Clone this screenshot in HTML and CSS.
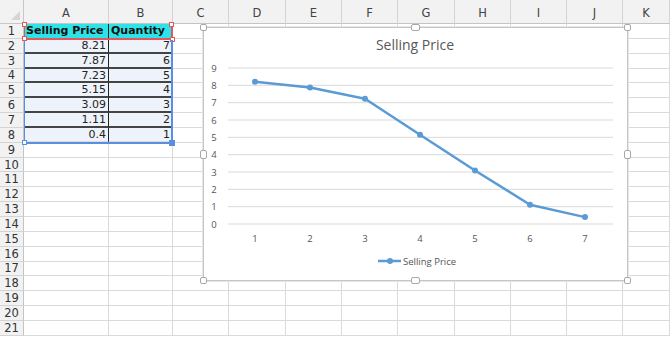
FILE: index.html
```html
<!DOCTYPE html>
<html lang="en">
<head>
    <meta charset="UTF-8">
    <title>Selling Price</title>
    <link rel="stylesheet" href="styles.css">
</head>
<body>
<div class="sheet">
    <div class="grid">
        <!-- column headers -->
        <div class="corner"></div>
        <div class="ch">A</div><div class="ch">B</div><div class="ch">C</div><div class="ch">D</div>
        <div class="ch">E</div><div class="ch">F</div><div class="ch">G</div><div class="ch">H</div>
        <div class="ch">I</div><div class="ch">J</div><div class="ch">K</div>

        <!-- data -->
        <div class="rh">1</div><div class="c head split">Selling Price</div><div class="c head">Quantity</div>
        <div class="c"></div><div class="c"></div><div class="c"></div><div class="c"></div><div class="c"></div><div class="c"></div><div class="c"></div><div class="c"></div><div class="c"></div>

        <div class="rh">2</div><div class="c num split">8.21</div><div class="c num">7</div>
        <div class="c"></div><div class="c"></div><div class="c"></div><div class="c"></div><div class="c"></div><div class="c"></div><div class="c"></div><div class="c"></div><div class="c"></div>

        <div class="rh">3</div><div class="c num split">7.87</div><div class="c num">6</div>
        <div class="c"></div><div class="c"></div><div class="c"></div><div class="c"></div><div class="c"></div><div class="c"></div><div class="c"></div><div class="c"></div><div class="c"></div>

        <div class="rh">4</div><div class="c num split">7.23</div><div class="c num">5</div>
        <div class="c"></div><div class="c"></div><div class="c"></div><div class="c"></div><div class="c"></div><div class="c"></div><div class="c"></div><div class="c"></div><div class="c"></div>

        <div class="rh">5</div><div class="c num split">5.15</div><div class="c num">4</div>
        <div class="c"></div><div class="c"></div><div class="c"></div><div class="c"></div><div class="c"></div><div class="c"></div><div class="c"></div><div class="c"></div><div class="c"></div>

        <div class="rh">6</div><div class="c num split">3.09</div><div class="c num">3</div>
        <div class="c"></div><div class="c"></div><div class="c"></div><div class="c"></div><div class="c"></div><div class="c"></div><div class="c"></div><div class="c"></div><div class="c"></div>

        <div class="rh">7</div><div class="c num split">1.11</div><div class="c num">2</div>
        <div class="c"></div><div class="c"></div><div class="c"></div><div class="c"></div><div class="c"></div><div class="c"></div><div class="c"></div><div class="c"></div><div class="c"></div>

        <div class="rh">8</div><div class="c num split last">0.4</div><div class="c num last">1</div>
        <div class="c"></div><div class="c"></div><div class="c"></div><div class="c"></div><div class="c"></div><div class="c"></div><div class="c"></div><div class="c"></div><div class="c"></div>

        <!-- empty rows -->
        <div class="rh">9</div><div class="c"></div><div class="c"></div><div class="c"></div><div class="c"></div><div class="c"></div><div class="c"></div><div class="c"></div><div class="c"></div><div class="c"></div><div class="c"></div><div class="c"></div>
        <div class="rh">10</div><div class="c"></div><div class="c"></div><div class="c"></div><div class="c"></div><div class="c"></div><div class="c"></div><div class="c"></div><div class="c"></div><div class="c"></div><div class="c"></div><div class="c"></div>
        <div class="rh">11</div><div class="c"></div><div class="c"></div><div class="c"></div><div class="c"></div><div class="c"></div><div class="c"></div><div class="c"></div><div class="c"></div><div class="c"></div><div class="c"></div><div class="c"></div>
        <div class="rh">12</div><div class="c"></div><div class="c"></div><div class="c"></div><div class="c"></div><div class="c"></div><div class="c"></div><div class="c"></div><div class="c"></div><div class="c"></div><div class="c"></div><div class="c"></div>
        <div class="rh">13</div><div class="c"></div><div class="c"></div><div class="c"></div><div class="c"></div><div class="c"></div><div class="c"></div><div class="c"></div><div class="c"></div><div class="c"></div><div class="c"></div><div class="c"></div>
        <div class="rh">14</div><div class="c"></div><div class="c"></div><div class="c"></div><div class="c"></div><div class="c"></div><div class="c"></div><div class="c"></div><div class="c"></div><div class="c"></div><div class="c"></div><div class="c"></div>
        <div class="rh">15</div><div class="c"></div><div class="c"></div><div class="c"></div><div class="c"></div><div class="c"></div><div class="c"></div><div class="c"></div><div class="c"></div><div class="c"></div><div class="c"></div><div class="c"></div>
        <div class="rh">16</div><div class="c"></div><div class="c"></div><div class="c"></div><div class="c"></div><div class="c"></div><div class="c"></div><div class="c"></div><div class="c"></div><div class="c"></div><div class="c"></div><div class="c"></div>
        <div class="rh">17</div><div class="c"></div><div class="c"></div><div class="c"></div><div class="c"></div><div class="c"></div><div class="c"></div><div class="c"></div><div class="c"></div><div class="c"></div><div class="c"></div><div class="c"></div>
        <div class="rh">18</div><div class="c"></div><div class="c"></div><div class="c"></div><div class="c"></div><div class="c"></div><div class="c"></div><div class="c"></div><div class="c"></div><div class="c"></div><div class="c"></div><div class="c"></div>
        <div class="rh">19</div><div class="c"></div><div class="c"></div><div class="c"></div><div class="c"></div><div class="c"></div><div class="c"></div><div class="c"></div><div class="c"></div><div class="c"></div><div class="c"></div><div class="c"></div>
        <div class="rh">20</div><div class="c"></div><div class="c"></div><div class="c"></div><div class="c"></div><div class="c"></div><div class="c"></div><div class="c"></div><div class="c"></div><div class="c"></div><div class="c"></div><div class="c"></div>
        <div class="rh">21</div><div class="c"></div><div class="c"></div><div class="c"></div><div class="c"></div><div class="c"></div><div class="c"></div><div class="c"></div><div class="c"></div><div class="c"></div><div class="c"></div><div class="c"></div>
    </div>

    <!-- range highlights of the chart source -->
    <div class="sel sel-name">
        <span class="knob tl"></span><span class="knob tr"></span><span class="knob bl"></span><span class="knob br"></span>
    </div>
    <div class="sel sel-values">
        <span class="knob bl"></span><span class="knob br fill"></span>
    </div>

    <!-- chart object -->
    <div class="chart">
        <svg class="plot" width="425" height="254" viewBox="0 0 425 254">
            <text class="title" x="212" y="23" text-anchor="middle">Selling Price</text>
            <g class="gridlines">
                <line x1="25" x2="410" y1="41" y2="41"/>
                <line x1="25" x2="410" y1="58.3" y2="58.3"/>
                <line x1="25" x2="410" y1="75.7" y2="75.7"/>
                <line x1="25" x2="410" y1="93" y2="93"/>
                <line x1="25" x2="410" y1="110.3" y2="110.3"/>
                <line x1="25" x2="410" y1="127.7" y2="127.7"/>
                <line x1="25" x2="410" y1="145" y2="145"/>
                <line x1="25" x2="410" y1="162.3" y2="162.3"/>
                <line x1="25" x2="410" y1="179.7" y2="179.7"/>
                <line x1="25" x2="410" y1="197" y2="197"/>
            </g>
            <g class="axis" text-anchor="middle">
                <text x="11" y="44.5">9</text>
                <text x="11" y="61.8">8</text>
                <text x="11" y="79.2">7</text>
                <text x="11" y="96.5">6</text>
                <text x="11" y="113.8">5</text>
                <text x="11" y="131.2">4</text>
                <text x="11" y="148.5">3</text>
                <text x="11" y="165.8">2</text>
                <text x="11" y="183.2">1</text>
                <text x="11" y="200.5">0</text>
                <text x="52" y="215">1</text>
                <text x="107" y="215">2</text>
                <text x="162" y="215">3</text>
                <text x="217" y="215">4</text>
                <text x="272" y="215">5</text>
                <text x="327" y="215">6</text>
                <text x="382" y="215">7</text>
            </g>
            <polyline class="series" points="52,54.7 107,60.6 162,71.7 217,107.8 272,143.5 327,177.8 382,190.1"/>
            <g class="marker">
                <circle cx="52" cy="54.7" r="3"/>
                <circle cx="107" cy="60.6" r="3"/>
                <circle cx="162" cy="71.7" r="3"/>
                <circle cx="217" cy="107.8" r="3"/>
                <circle cx="272" cy="143.5" r="3"/>
                <circle cx="327" cy="177.8" r="3"/>
                <circle cx="382" cy="190.1" r="3"/>
            </g>
            <line class="series" x1="175" x2="198" y1="234" y2="234"/>
            <circle class="marker" cx="187" cy="234" r="3"/>
            <text class="legend" x="200" y="237.5">Selling Price</text>
        </svg>
        <span class="grip g-tl"></span><span class="grip g-tm"></span><span class="grip g-tr"></span>
        <span class="grip g-ml"></span><span class="grip g-mr"></span>
        <span class="grip g-bl"></span><span class="grip g-bm"></span><span class="grip g-br"></span>
    </div>
</div>
</body>
</html>
```

FILE: styles.css
```css
body {
    margin: 0;
    background: #ffffff;
    font-family: 'DejaVu Sans', 'Liberation Sans', sans-serif;
    overflow: hidden;
}
.sheet {
    position: relative;
    width: 670px;
    height: 338px;
    overflow: hidden;
}
.grid {
    display: grid;
    grid-template-columns: 24px 85px 64px 56px 57px 56px 56px 57px 56px 56px 56px 1fr;
    grid-template-rows: 24px repeat(21, 14.85px);
}
.grid > div {
    box-sizing: border-box;
}
.corner {
    position: relative;
    background: #f2f2f2;
    border-right: 1px solid #c8c8c8;
    border-bottom: 1px solid #c8c8c8;
}
.corner::after {
    content: "";
    position: absolute;
    right: 3px;
    bottom: 3px;
    border-left: 9px solid transparent;
    border-bottom: 9px solid #d6d6d6;
}
.ch {
    display: flex;
    align-items: center;
    justify-content: center;
    padding-top: 2px;
    background: #f2f2f2;
    border-right: 1px solid #d4d4d4;
    border-bottom: 1px solid #c4c4c4;
    font-size: 11.5px;
    color: #444;
}
.rh {
    display: flex;
    align-items: center;
    justify-content: center;
    background: #f2f2f2;
    border-right: 1px solid #c4c4c4;
    border-bottom: 1px solid #d4d4d4;
    font-size: 11.5px;
    color: #333;
}
.c {
    border-right: 1px solid #dadada;
    border-bottom: 1px solid #dadada;
    font-size: 11px;
    line-height: 14px;
    color: #222;
    white-space: nowrap;
    overflow: hidden;
}
.head {
    background: #2ee3e8;
    font-weight: bold;
    color: #111;
    padding-left: 2px;
}
.num {
    background: #eef2fa;
    text-align: right;
    padding-right: 2px;
    border-bottom: 2px solid #444;
}
.num.last {
    border-bottom-color: #dadada;
}
.split {
    border-right: 1px solid #222;
}

/* source range outlines */
.sel {
    position: absolute;
    left: 24px;
    width: 149px;
    box-sizing: border-box;
}
.sel-name {
    top: 24px;
    height: 16px;
    border: 1px solid #e2575a;
    border-width: 0 2px 2px 1px;
}
.sel-values {
    top: 40px;
    height: 104px;
    border: 1px solid #5a8ee0;
    border-width: 0 2px 2px 1px;
}
.knob {
    position: absolute;
    width: 3px;
    height: 3px;
    background: #fff;
    border: 1px solid currentColor;
}
.sel-name .knob { color: #e2575a; }
.sel-values .knob { color: #5a8ee0; }
.knob.tl { left: -3px; top: -2px; }
.knob.tr { right: -3px; top: -2px; }
.knob.bl { left: -3px; bottom: -3px; }
.knob.br { right: -4px; bottom: -4px; }
.knob.fill { background: #5a8ee0; width: 4px; height: 4px; }

/* chart */
.chart {
    position: absolute;
    left: 203px;
    top: 27px;
    width: 425px;
    height: 254px;
    box-sizing: border-box;
    background: #fff;
    border: 1px solid #c6c6c6;
    box-shadow: 0 0 0 1px #e6e6e6;
}
.plot {
    position: absolute;
    left: -1px;
    top: -1px;
    font-family: 'Open Sans', 'Liberation Sans', sans-serif;
}
.title {
    font-size: 14px;
    fill: #595959;
}
.gridlines line {
    stroke: #d9d9d9;
    stroke-width: 1;
}
.axis text {
    font-size: 9.5px;
    fill: #555;
}
.series {
    fill: none;
    stroke: #5b9bd5;
    stroke-width: 2.5;
    stroke-linejoin: round;
}
.marker,
.marker circle {
    fill: #5b9bd5;
}
.legend {
    font-size: 9.5px;
    fill: #555;
}
.grip {
    position: absolute;
    width: 5px;
    height: 5px;
    background: #fff;
    border: 1px solid #a8a8a8;
    border-radius: 2px;
}
.g-tl { left: -4px; top: -4px; }
.g-tm { left: 207px; top: -4px; width: 7px; }
.g-tr { right: -4px; top: -4px; }
.g-ml { left: -4px; top: 122px; height: 7px; }
.g-mr { right: -4px; top: 122px; height: 7px; }
.g-bl { left: -4px; bottom: -4px; }
.g-bm { left: 207px; bottom: -4px; width: 7px; }
.g-br { right: -4px; bottom: -4px; }
```
